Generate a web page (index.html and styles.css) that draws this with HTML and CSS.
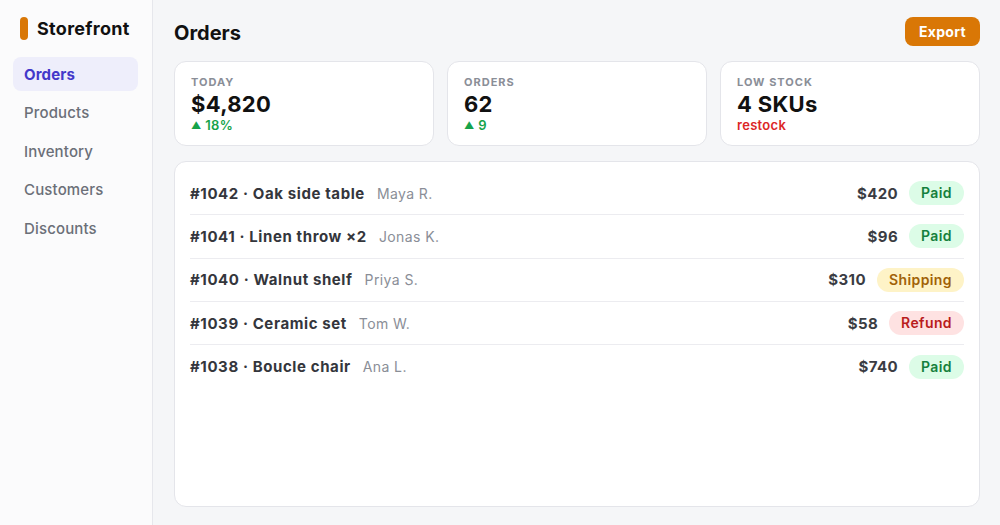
FILE: index.html
```html
<!DOCTYPE html>
<html lang="en">
<head>
<meta charset="utf-8">
<title>Storefront</title>
<link rel="stylesheet" href="styles.css">
</head>
<body>
<div class="app">
  <aside class="sidebar">
    <div class="brand"><span class="brand-mark"></span><span class="brand-name">Storefront</span></div>
    <nav class="nav">
      <a class="nav-item active">Orders</a>
      <a class="nav-item">Products</a>
      <a class="nav-item">Inventory</a>
      <a class="nav-item">Customers</a>
      <a class="nav-item">Discounts</a>
    </nav>
  </aside>
  <main class="main">
    <header class="topbar">
      <h1 class="title">Orders</h1>
      <button class="btn-export">Export</button>
    </header>
    <section class="stats">
      <div class="stat">
        <div class="stat-label">TODAY</div>
        <div class="stat-value">$4,820</div>
        <div class="stat-sub up"><span class="tri">▲</span> 18%</div>
      </div>
      <div class="stat">
        <div class="stat-label">ORDERS</div>
        <div class="stat-value">62</div>
        <div class="stat-sub up"><span class="tri">▲</span> 9</div>
      </div>
      <div class="stat">
        <div class="stat-label">LOW STOCK</div>
        <div class="stat-value">4 SKUs</div>
        <div class="stat-sub warn">restock</div>
      </div>
    </section>
    <section class="orders">
      <div class="row">
        <span class="item">#1042 · Oak side table</span><span class="cust">Maya R.</span>
        <span class="amt">$420</span><span class="badge paid">Paid</span>
      </div>
      <div class="row">
        <span class="item">#1041 · Linen throw ×2</span><span class="cust">Jonas K.</span>
        <span class="amt">$96</span><span class="badge paid">Paid</span>
      </div>
      <div class="row">
        <span class="item">#1040 · Walnut shelf</span><span class="cust">Priya S.</span>
        <span class="amt">$310</span><span class="badge ship">Shipping</span>
      </div>
      <div class="row">
        <span class="item">#1039 · Ceramic set</span><span class="cust">Tom W.</span>
        <span class="amt">$58</span><span class="badge refund">Refund</span>
      </div>
      <div class="row">
        <span class="item">#1038 · Boucle chair</span><span class="cust">Ana L.</span>
        <span class="amt">$740</span><span class="badge paid">Paid</span>
      </div>
    </section>
  </main>
</div>
</body>
</html>
```

FILE: styles.css
```css
* { box-sizing: border-box; }
html, body { margin: 0; padding: 0; height: 100%; }
body {
  font-family: Inter, "Noto Sans", "Liberation Sans", sans-serif;
  background: #f5f6f8;
  color: #111;
  letter-spacing: 0.15px;
}
.app { display: flex; height: 525px; }
.sidebar {
  width: 153px;
  flex: none;
  background: #fbfbfc;
  border-right: 1px solid #e6e7ec;
  padding: 17px 14px 0 13px;
}
.brand { display: flex; align-items: center; padding-left: 7px; height: 23px; }
.brand-mark { width: 8px; height: 23px; border-radius: 4px; background: #d97706; margin-right: 9px; }
.brand-name { font-size: 18px; font-weight: 700; color: #111; letter-spacing: 0.3px; }
.nav { display: flex; flex-direction: column; gap: 4.5px; margin-top: 17px; }
.nav-item {
  display: flex; align-items: center;
  height: 34px; padding-left: 11px;
  border-radius: 8px;
  font-size: 15px; font-weight: 500; color: #6b6f78;
}
.nav-item.active { background: #eeeefb; color: #4338ca; font-weight: 700; }
.main { flex: 1; display: flex; flex-direction: column; padding: 17px 20px 18px 21px; }
.topbar { display: flex; align-items: center; justify-content: space-between; height: 29px; }
.title { margin: 0; font-size: 20px; font-weight: 700; color: #111; padding-top: 3px; letter-spacing: 0; }
.btn-export {
  border: 0; background: #d97706; color: #fff;
  font-family: inherit; font-size: 14px; font-weight: 700; letter-spacing: 0.3px;
  height: 29px; width: 75px; border-radius: 8px;
}
.stats { display: grid; grid-template-columns: repeat(3, 1fr); gap: 13px; margin-top: 15px; }
.stat {
  background: #fff; border: 1px solid #e4e5ea; border-radius: 12px;
  height: 85px; padding: 13px 16px 0;
}
.stat-label { font-size: 11px; font-weight: 700; letter-spacing: 1px; color: #8a8e97; line-height: 14px; }
.stat-value { font-size: 22px; font-weight: 700; color: #111; line-height: 26px; margin-top: 2px; letter-spacing: 0.3px; }
.stat-sub { font-size: 13px; font-weight: 600; line-height: 16px; margin-top: 0; letter-spacing: 0.3px; }
.stat-sub .tri { font-size: 10px; position: relative; top: -1px; }
.stat-sub.up { color: #16a34a; }
.stat-sub.warn { color: #dc2626; }
.orders {
  flex: 1; margin-top: 15px;
  background: #fff; border: 1px solid #e4e5ea; border-radius: 12px;
  padding: 10px 15px 0 15px;
}
.row {
  display: flex; align-items: center;
  height: 43.3px; border-bottom: 1px solid #ececf0;
}
.row:last-child { border-bottom: 0; }
.item { font-size: 15px; font-weight: 700; color: #34363c; letter-spacing: 0.6px; }
.cust { font-size: 14px; color: #8a8e97; margin-left: 12px; flex: 1; letter-spacing: 0.4px; }
.amt { font-size: 15px; font-weight: 700; color: #3a3c43; margin-right: 11px; letter-spacing: 0.4px; }
.badge {
  font-size: 14px; font-weight: 600; height: 24px; line-height: 24px;
  padding: 0 12px; border-radius: 12px; letter-spacing: 0.4px;
}
.badge.paid { background: #dcfce7; color: #15803d; }
.badge.ship { background: #fef3c7; color: #a16207; }
.badge.refund { background: #fee2e2; color: #b91c1c; }
```
